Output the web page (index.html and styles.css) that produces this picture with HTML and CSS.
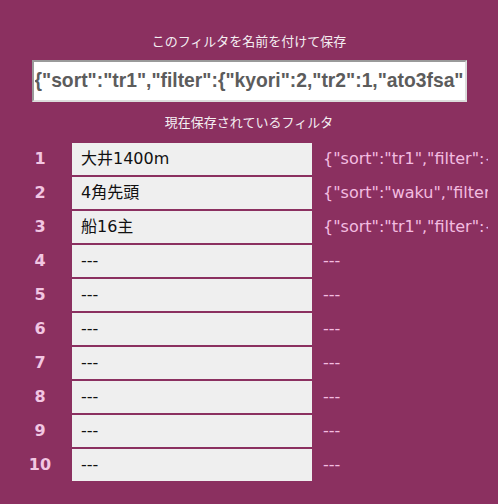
FILE: index.html
```html
<!DOCTYPE html>
<html lang="ja">
<head>
<meta charset="utf-8">
<title>フィルタ保存</title>
<link rel="stylesheet" href="styles.css">
</head>
<body>
<div class="page">
  <div class="heading">このフィルタを名前を付けて保存</div>
  <input class="name-input" type="text" value='{"sort":"tr1","filter":{"kyori":2,"tr2":1,"ato3fsa":1}}'>
  <div class="heading heading-saved">現在保存されているフィルタ</div>
  <table class="filters">
    <colgroup><col class="c-num"><col class="c-name"><col class="c-json"></colgroup>
    <tbody>
      <tr><td class="num">1</td><td class="name">大井1400m</td><td class="json">{"sort":"tr1","filter":{"kyori":2,"tr2":1}}</td></tr>
      <tr><td class="num">2</td><td class="name">4角先頭</td><td class="json">{"sort":"waku","filter":{"ato4":1}}</td></tr>
      <tr><td class="num">3</td><td class="name">船16主</td><td class="json">{"sort":"tr1","filter":{"kyori":1}}</td></tr>
      <tr><td class="num">4</td><td class="name">---</td><td class="json">---</td></tr>
      <tr><td class="num">5</td><td class="name">---</td><td class="json">---</td></tr>
      <tr><td class="num">6</td><td class="name">---</td><td class="json">---</td></tr>
      <tr><td class="num">7</td><td class="name">---</td><td class="json">---</td></tr>
      <tr><td class="num">8</td><td class="name">---</td><td class="json">---</td></tr>
      <tr><td class="num">9</td><td class="name">---</td><td class="json">---</td></tr>
      <tr><td class="num">10</td><td class="name">---</td><td class="json">---</td></tr>
    </tbody>
  </table>
</div>
</body>
</html>
```

FILE: styles.css
```css
html, body {
  background: #8b3060;
}
body {
  margin: 8px;
  font-family: "DejaVu Sans", "Noto Sans CJK JP", sans-serif;
}
.page {
  padding-top: 23px;
}
.heading {
  color: #f4eef2;
  font-family: "Noto Sans CJK JP", sans-serif;
  font-size: 13px;
  line-height: 20px;
  text-align: center;
}
.name-input {
  display: block;
  box-sizing: border-box;
  width: 435px;
  height: 42px;
  margin: 9px auto 0;
  padding: 1px 1px;
  border: 2px solid;
  border-color: #9a9a9a #dcdcdc #dcdcdc #9a9a9a;
  background: #ffffff;
  color: #5c5c5c;
  font-family: "Liberation Sans", Arial, sans-serif;
  font-weight: bold;
  font-size: 19.3px;
  outline: none;
}
.heading-saved {
  margin-top: 10px;
}
.filters {
  width: 100%;
  margin-top: 9px;
  table-layout: fixed;
  border-collapse: separate;
  border-spacing: 2px;
}
.c-num { width: 60px; }
.c-name { width: 240px; }
.filters td {
  height: 32px;
  padding: 0 0 0 9px;
  box-sizing: border-box;
  vertical-align: middle;
  font-size: 16px;
  line-height: 20px;
}
.filters td.num {
  padding: 0;
  text-align: center;
  color: #f2c6e2;
  font-weight: bold;
}
.filters td.name {
  background: #efefef;
  color: #111111;
}
.filters td.json {
  color: #f3bde0;
  white-space: nowrap;
  overflow: hidden;
}
```
